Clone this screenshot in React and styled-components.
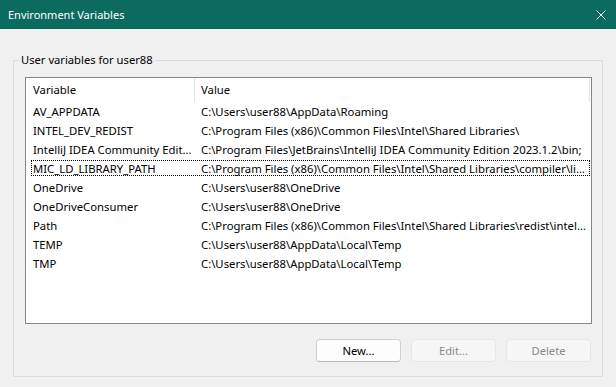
import React from "react";
import styled, { createGlobalStyle } from "styled-components";

const GlobalStyle = createGlobalStyle`
  html, body {
    margin: 0;
    padding: 0;
    background: #f0f0f0;
  }
  body {
    font-family: "Noto Sans", "Liberation Sans", sans-serif;
    font-size: 11px;
    color: #000;
  }
`;

const Window = styled.div`
  width: 616px;
  height: 387px;
  display: flex;
  flex-direction: column;
  background: #f0f0f0;
  overflow: hidden;
`;

const TitleBar = styled.div`
  flex: none;
  height: 29px;
  box-sizing: border-box;
  padding: 0 10px 0 8px;
  display: flex;
  align-items: center;
  justify-content: space-between;
  background: #0c6b5f;
  color: #fff;
`;

const Title = styled.span`
  font-size: 11px;
  line-height: 16px;
`;

const CloseButton = styled.button`
  width: 10px;
  height: 10px;
  padding: 0;
  border: 0;
  background: none;
  display: flex;
  color: #fff;
`;

const Content = styled.div`
  flex: 1;
  padding: 23px 13px 10px 13px;
`;

const Group = styled.fieldset`
  margin: 0;
  padding: 0 10px 14px 11px;
  border: 1px solid #dcdcdc;
  min-width: 0;
`;

const Legend = styled.legend`
  margin-left: -6px;
  padding: 0 2px;
  font-size: 11.2px;
  line-height: 16px;
`;

const ListBox = styled.div`
  margin-top: 9px;
  height: 247px;
  box-sizing: border-box;
  border: 1px solid #828790;
  background: #fff;
  display: flex;
  flex-direction: column;
  overflow: hidden;
  font-size: 11.3px;
`;

const Header = styled.div`
  flex: none;
  height: 24px;
  display: grid;
  grid-template-columns: 169px 395px;
`;

const HeaderCell = styled.div`
  padding-left: ${({ $pad }) => $pad}px;
  line-height: 24px;
  border-right: 1px solid #e5e5e5;
  white-space: nowrap;
  overflow: hidden;
`;

const Rows = styled.div`
  padding: 0 2px 0 5px;
`;

const Row = styled.div`
  position: relative;
  height: 19px;
  display: grid;
  grid-template-columns: 164px minmax(0, 1fr);
  line-height: 19px;

  &::after {
    content: "";
    display: ${({ $focused }) => ($focused ? "block" : "none")};
    position: absolute;
    left: 0;
    right: -1px;
    top: 1px;
    bottom: 2px;
    border: 1px dotted #000;
  }
`;

const Cell = styled.div`
  padding-left: ${({ $pad }) => $pad}px;
  padding-right: 2px;
  white-space: nowrap;
  overflow: hidden;
  text-overflow: ellipsis;
`;

const ButtonBar = styled.div`
  margin-top: 15px;
  padding-right: 1px;
  display: flex;
  justify-content: flex-end;
  gap: 10px;
`;

const Button = styled.button`
  width: 85px;
  height: 23px;
  padding: 0;
  box-sizing: border-box;
  font-family: inherit;
  font-size: 11.2px;
  border-radius: 4px;
  border: 1px solid ${({ disabled }) => (disabled ? "#e6e6e6" : "#d0d0d0")};
  border-bottom-color: ${({ disabled }) => (disabled ? "#e6e6e6" : "#b8b8b8")};
  background: ${({ disabled }) => (disabled ? "#f6f6f6" : "#fdfdfd")};
  color: ${({ disabled }) => (disabled ? "#8a8a8a" : "#000")};
`;

const variables = [
  ["AV_APPDATA", "C:\\Users\\user88\\AppData\\Roaming"],
  ["INTEL_DEV_REDIST", "C:\\Program Files (x86)\\Common Files\\Intel\\Shared Libraries\\"],
  [
    "IntelliJ IDEA Community Edition 2023.1.2",
    "C:\\Program Files\\JetBrains\\IntelliJ IDEA Community Edition 2023.1.2\\bin;",
  ],
  [
    "MIC_LD_LIBRARY_PATH",
    "C:\\Program Files (x86)\\Common Files\\Intel\\Shared Libraries\\compiler\\lib\\intel64_win_mic",
  ],
  ["OneDrive", "C:\\Users\\user88\\OneDrive"],
  ["OneDriveConsumer", "C:\\Users\\user88\\OneDrive"],
  [
    "Path",
    "C:\\Program Files (x86)\\Common Files\\Intel\\Shared Libraries\\redist\\intel64\\compiler",
  ],
  ["TEMP", "C:\\Users\\user88\\AppData\\Local\\Temp"],
  ["TMP", "C:\\Users\\user88\\AppData\\Local\\Temp"],
];

const App = () => {
  return (
    <>
      <GlobalStyle />
      <Window>
        <TitleBar>
          <Title>Environment Variables</Title>
          <CloseButton aria-label="Close">
            <svg width="10" height="10" viewBox="0 0 10 10">
              <path d="M0.5 0.5L9.5 9.5M9.5 0.5L0.5 9.5" stroke="currentColor" strokeWidth="1" />
            </svg>
          </CloseButton>
        </TitleBar>
        <Content>
          <Group>
            <Legend>User variables for user88</Legend>
            <ListBox>
              <Header>
                <HeaderCell $pad={7}>Variable</HeaderCell>
                <HeaderCell $pad={6}>Value</HeaderCell>
              </Header>
              <Rows>
                {variables.map(([name, value], key) => (
                  <Row key={key} $focused={name === "MIC_LD_LIBRARY_PATH"}>
                    <Cell $pad={2}>{name}</Cell>
                    <Cell $pad={6}>{value}</Cell>
                  </Row>
                ))}
              </Rows>
            </ListBox>
            <ButtonBar>
              <Button>New...</Button>
              <Button disabled>Edit...</Button>
              <Button disabled>Delete</Button>
            </ButtonBar>
          </Group>
        </Content>
      </Window>
    </>
  );
};

export default App;
